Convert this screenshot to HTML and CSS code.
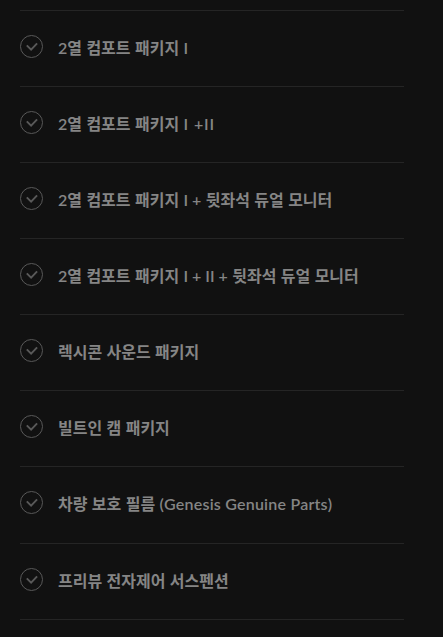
FILE: index.html
```
<!DOCTYPE html>
<html lang="ko">
<head>
  <meta charset="UTF-8">
  <meta name="viewport" content="width=device-width, initial-scale=1.0">
  <title>선택 품목</title>
  <link rel="stylesheet" href="styles.css">
</head>
<body>
  <!-- Shared check icon -->
  <svg class="symbols" width="0" height="0">
    <symbol id="check" viewBox="0 0 23 23">
      <circle cx="11.5" cy="11.5" r="11"/>
      <path d="M6.8 10.3l4.3 4.3 6-6.2"/>
    </symbol>
  </svg>

  <ul class="option-list">
    <li class="option">
      <svg class="check"><use href="#check"/></svg>
      <span class="name"><span class="latin">2</span>열 컴포트 패키지 <span class="latin">I</span></span>
    </li>
    <li class="option">
      <svg class="check"><use href="#check"/></svg>
      <span class="name"><span class="latin">2</span>열 컴포트 패키지 <span class="latin roman">I +II</span></span>
    </li>
    <li class="option">
      <svg class="check"><use href="#check"/></svg>
      <span class="name"><span class="latin">2</span>열 컴포트 패키지 <span class="latin">I +</span> 뒷좌석 듀얼 모니터</span>
    </li>
    <li class="option">
      <svg class="check"><use href="#check"/></svg>
      <span class="name"><span class="latin">2</span>열 컴포트 패키지 <span class="latin">I + II +</span> 뒷좌석 듀얼 모니터</span>
    </li>
    <li class="option">
      <svg class="check"><use href="#check"/></svg>
      <span class="name">렉시콘 사운드 패키지</span>
    </li>
    <li class="option">
      <svg class="check"><use href="#check"/></svg>
      <span class="name">빌트인 캠 패키지</span>
    </li>
    <li class="option option-tall">
      <svg class="check"><use href="#check"/></svg>
      <span class="name">차량 보호 필름 <span class="latin brand">(Genesis Genuine Parts)</span></span>
    </li>
    <li class="option">
      <svg class="check"><use href="#check"/></svg>
      <span class="name">프리뷰 전자제어 서스펜션</span>
    </li>
  </ul>
</body>
</html>
```
FILE: styles.css
```
* {
  box-sizing: border-box;
}
body {
  margin: 0;
  background: #111;
  color: #858585;
  font-family: 'Lato', 'Noto Sans CJK KR', sans-serif;
}
.symbols {
  display: block;
}
.option-list {
  width: 384px;
  margin: 10px 0 0 20px;
  padding: 0;
  list-style: none;
  border-top: 1px solid #252525;
}
.option {
  display: flex;
  align-items: flex-start;
  height: 76px;
  padding-top: 24px;
  border-bottom: 1px solid #252525;
}
.option-tall {
  height: 77px;
}
.check {
  flex: none;
  width: 23px;
  height: 23px;
  margin-right: 15px;
  fill: none;
  stroke: #595959;
  stroke-width: 1;
}
#check path {
  stroke-width: 1.9;
}
.name {
  font-size: 16px;
  font-weight: 700;
  line-height: 26px;
  white-space: nowrap;
  word-spacing: 0.5px;
}
.latin {
  font-weight: 600;
  word-spacing: 0;
}
.roman {
  letter-spacing: 0.9px;
}
.brand {
  letter-spacing: 0.22px;
}
```
